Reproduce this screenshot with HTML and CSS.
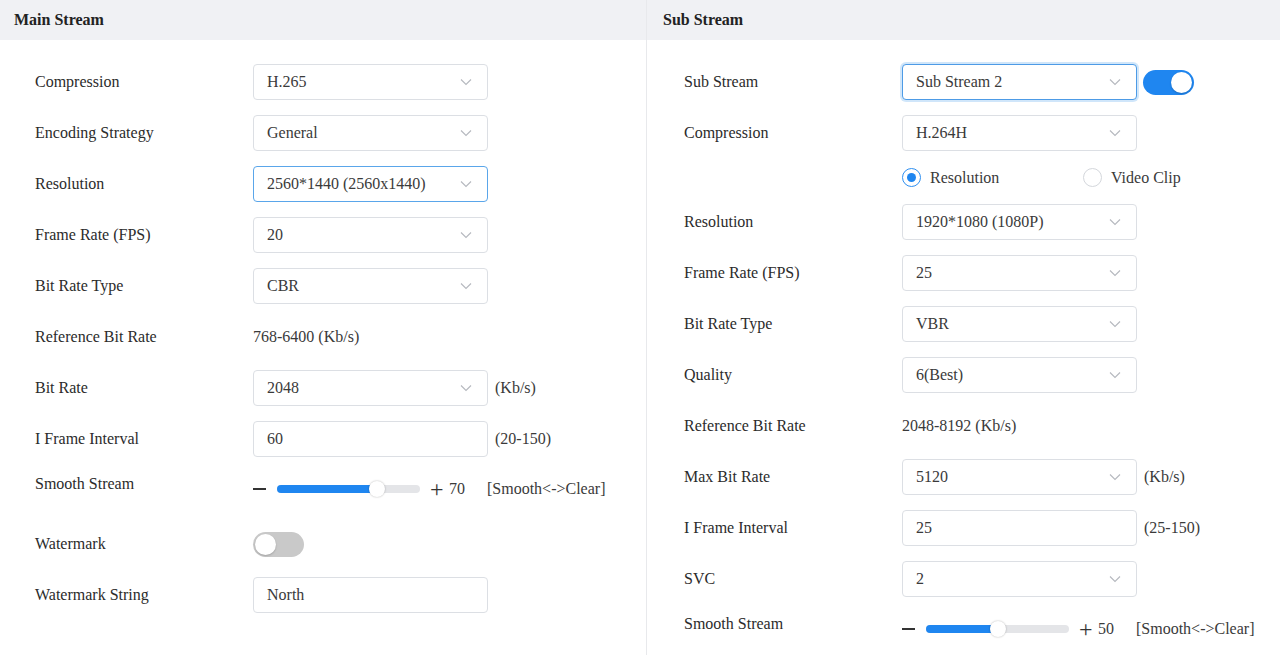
FILE: index.html
```html
<!DOCTYPE html>
<html>
<head>
<meta charset="utf-8">
<link rel="stylesheet" href="styles.css">
</head>
<body>
<div class="page">
  <section class="panel panel-left">
    <div class="panel-head">Main Stream</div>
    <div class="panel-body">
      <div class="row"><div class="label">Compression</div><div class="select"><span>H.265</span><svg class="chev" viewBox="0 0 12 8"><path d="M1 1.5 L6 6.5 L11 1.5"/></svg></div></div>
      <div class="row"><div class="label">Encoding Strategy</div><div class="select"><span>General</span><svg class="chev" viewBox="0 0 12 8"><path d="M1 1.5 L6 6.5 L11 1.5"/></svg></div></div>
      <div class="row"><div class="label">Resolution</div><div class="select focus"><span>2560*1440 (2560x1440)</span><svg class="chev" viewBox="0 0 12 8"><path d="M1 1.5 L6 6.5 L11 1.5"/></svg></div></div>
      <div class="row"><div class="label">Frame Rate (FPS)</div><div class="select"><span>20</span><svg class="chev" viewBox="0 0 12 8"><path d="M1 1.5 L6 6.5 L11 1.5"/></svg></div></div>
      <div class="row"><div class="label">Bit Rate Type</div><div class="select"><span>CBR</span><svg class="chev" viewBox="0 0 12 8"><path d="M1 1.5 L6 6.5 L11 1.5"/></svg></div></div>
      <div class="row"><div class="label">Reference Bit Rate</div><div class="value">768-6400 (Kb/s)</div></div>
      <div class="row"><div class="label">Bit Rate</div><div class="select"><span>2048</span><svg class="chev" viewBox="0 0 12 8"><path d="M1 1.5 L6 6.5 L11 1.5"/></svg></div><div class="unit">(Kb/s)</div></div>
      <div class="row"><div class="label">I Frame Interval</div><div class="input">60</div><div class="unit">(20-150)</div></div>
      <div class="row row-slider"><div class="label">Smooth Stream</div>
        <div class="slider-wrap">
          <span class="minus"></span>
          <div class="track"><div class="fill" style="width:70%"></div><div class="thumb" style="left:70%"></div></div>
          <span class="plus">+</span><span class="num">70</span>
          <span class="hint">[Smooth&lt;-&gt;Clear]</span>
        </div>
      </div>
      <div class="row"><div class="label">Watermark</div><div class="toggle"><div class="knob"></div></div></div>
      <div class="row"><div class="label">Watermark String</div><div class="input">North</div></div>
    </div>
  </section>
  <section class="panel panel-right">
    <div class="panel-head">Sub Stream</div>
    <div class="panel-body">
      <div class="row"><div class="label">Sub Stream</div><div class="select focus glow"><span>Sub Stream 2</span><svg class="chev" viewBox="0 0 12 8"><path d="M1 1.5 L6 6.5 L11 1.5"/></svg></div><div class="toggle on"><div class="knob"></div></div></div>
      <div class="row"><div class="label">Compression</div><div class="select"><span>H.264H</span><svg class="chev" viewBox="0 0 12 8"><path d="M1 1.5 L6 6.5 L11 1.5"/></svg></div></div>
      <div class="row row-radio"><div class="label"></div>
        <div class="radios">
          <label class="radio checked"><span class="dot"></span>Resolution</label>
          <label class="radio"><span class="dot"></span>Video Clip</label>
        </div>
      </div>
      <div class="row"><div class="label">Resolution</div><div class="select"><span>1920*1080 (1080P)</span><svg class="chev" viewBox="0 0 12 8"><path d="M1 1.5 L6 6.5 L11 1.5"/></svg></div></div>
      <div class="row"><div class="label">Frame Rate (FPS)</div><div class="select"><span>25</span><svg class="chev" viewBox="0 0 12 8"><path d="M1 1.5 L6 6.5 L11 1.5"/></svg></div></div>
      <div class="row"><div class="label">Bit Rate Type</div><div class="select"><span>VBR</span><svg class="chev" viewBox="0 0 12 8"><path d="M1 1.5 L6 6.5 L11 1.5"/></svg></div></div>
      <div class="row"><div class="label">Quality</div><div class="select"><span>6(Best)</span><svg class="chev" viewBox="0 0 12 8"><path d="M1 1.5 L6 6.5 L11 1.5"/></svg></div></div>
      <div class="row"><div class="label">Reference Bit Rate</div><div class="value">2048-8192 (Kb/s)</div></div>
      <div class="row"><div class="label">Max Bit Rate</div><div class="select"><span>5120</span><svg class="chev" viewBox="0 0 12 8"><path d="M1 1.5 L6 6.5 L11 1.5"/></svg></div><div class="unit">(Kb/s)</div></div>
      <div class="row"><div class="label">I Frame Interval</div><div class="input">25</div><div class="unit">(25-150)</div></div>
      <div class="row"><div class="label">SVC</div><div class="select"><span>2</span><svg class="chev" viewBox="0 0 12 8"><path d="M1 1.5 L6 6.5 L11 1.5"/></svg></div></div>
      <div class="row row-slider"><div class="label">Smooth Stream</div>
        <div class="slider-wrap">
          <span class="minus"></span>
          <div class="track"><div class="fill" style="width:50%"></div><div class="thumb" style="left:50%"></div></div>
          <span class="plus">+</span><span class="num">50</span>
          <span class="hint">[Smooth&lt;-&gt;Clear]</span>
        </div>
      </div>
    </div>
  </section>
</div>
</body>
</html>
```
FILE: styles.css
```css
* { box-sizing: border-box; }
html, body { margin: 0; padding: 0; background: #fff; }
body {
  font-family: "Liberation Serif", "DejaVu Serif", serif;
  font-size: 16px;
  color: #2b2b2b;
  overflow: hidden;
}
.page {
  display: flex;
  width: 1280px;
  height: 655px;
}
.panel-left {
  width: 647px;
  border-right: 1px solid #e8e9ec;
}
.panel-right {
  flex: 1;
}
.panel-head {
  height: 40px;
  background: #f0f1f4;
  font-weight: bold;
  line-height: 40px;
  color: #222;
}
.panel-left .panel-head { padding-left: 14px; }
.panel-right .panel-head { padding-left: 16px; }
.panel-body {
  padding-top: 24px;
  display: flex;
  flex-direction: column;
  gap: 15px;
}
.panel-left .panel-body { padding-left: 35px; }
.panel-right .panel-body { padding-left: 37px; }
.row {
  display: flex;
  align-items: center;
  min-height: 36px;
}
.label {
  width: 218px;
  flex: none;
  color: #2b2b2b;
}
.select, .input {
  width: 235px;
  height: 36px;
  border: 1px solid #dcdfe4;
  border-radius: 4px;
  padding: 0 13px;
  display: flex;
  align-items: center;
  justify-content: space-between;
  color: #3a3a3a;
  background: #fff;
  flex: none;
}
.select.focus { border-color: #5aa6ea; }
.select.glow { box-shadow: 0 0 0 2px rgba(120, 182, 240, 0.35); border-color: #4d9be6; }
.chev {
  width: 12px;
  height: 8px;
  margin-right: 2px;
  fill: none;
  stroke: #b5b8be;
  stroke-width: 1.1;
}
.value { color: #3a3a3a; }
.unit { margin-left: 7px; color: #3a3a3a; }
.row-radio { min-height: 23px; }
.radios { display: flex; }
.radio {
  display: flex;
  align-items: center;
  width: 181px;
  color: #3a3a3a;
}
.dot {
  width: 19px;
  height: 19px;
  border-radius: 50%;
  border: 1px solid #d4d7dc;
  margin-right: 9px;
  position: relative;
  flex: none;
}
.radio.checked .dot { border-color: #2f8ff0; }
.radio.checked .dot::after {
  content: "";
  position: absolute;
  left: 4px; top: 4px;
  width: 9px; height: 9px;
  border-radius: 50%;
  background: #1f86f0;
}
.row-slider {
  align-items: flex-start;
  min-height: 39px;
}
.row-slider .label { line-height: 24px; }
.slider-wrap {
  display: flex;
  align-items: center;
  height: 34px;
  color: #3a3a3a;
}
.minus {
  width: 13px;
  height: 1.5px;
  background: #333;
  margin: 0 11px 0 0;
}
.track {
  width: 143px;
  height: 8px;
  background: #e4e5e8;
  border-radius: 4px;
  position: relative;
}
.fill {
  height: 8px;
  background: #1f86f0;
  border-radius: 4px;
}
.thumb {
  position: absolute;
  top: -4px;
  width: 16px;
  height: 16px;
  margin-left: -8px;
  border-radius: 50%;
  background: #fff;
  box-shadow: 0 0 2px rgba(0,0,0,0.3);
}
.plus { margin-left: 10px; font-size: 24px; line-height: 1; color: #333; width: 19px; font-weight: 300; }
.num { width: 38px; }
.hint { color: #3a3a3a; }
.toggle {
  width: 51px;
  height: 25px;
  border-radius: 13px;
  background: #c9c9c9;
  position: relative;
  flex: none;
}
.toggle .knob {
  position: absolute;
  top: 2px;
  left: 2px;
  width: 21px;
  height: 21px;
  border-radius: 50%;
  background: #fff;
  box-shadow: 0 1px 2px rgba(0,0,0,0.2);
}
.toggle.on {
  background: #1f86f0;
  margin-left: 6px;
}
.toggle.on .knob { left: 28px; }
```
